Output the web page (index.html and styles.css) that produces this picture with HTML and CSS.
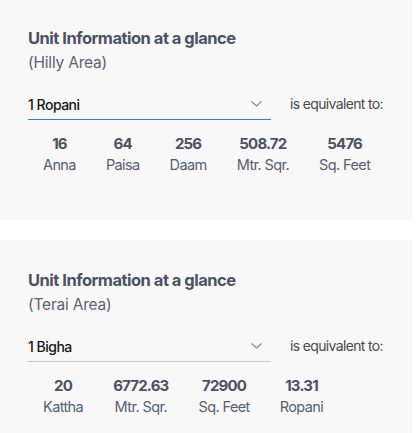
FILE: index.html
```html
<!DOCTYPE html>
<html>
<head>
<meta charset="utf-8">
<link rel="stylesheet" href="styles.css">
</head>
<body>
<section class="card">
  <h2 class="title">Unit Information at a glance</h2>
  <p class="subtitle">(Hilly Area)</p>
  <div class="row">
    <div class="select focus">
      <span class="select-value">1 Ropani</span>
      <svg class="chev" width="11" height="6" viewBox="0 0 11 6"><path d="M0.5 0.5 L5.5 5 L10.5 0.5" fill="none" stroke="#8a8a8a" stroke-width="1.2"/></svg>
    </div>
    <span class="equiv">is equivalent to:</span>
  </div>
  <div class="values">
    <div class="item"><div class="num">16</div><div class="label">Anna</div></div>
    <div class="item"><div class="num">64</div><div class="label">Paisa</div></div>
    <div class="item"><div class="num">256</div><div class="label">Daam</div></div>
    <div class="item"><div class="num">508.72</div><div class="label">Mtr. Sqr.</div></div>
    <div class="item"><div class="num">5476</div><div class="label">Sq. Feet</div></div>
  </div>
</section>
<section class="card">
  <h2 class="title">Unit Information at a glance</h2>
  <p class="subtitle">(Terai Area)</p>
  <div class="row">
    <div class="select">
      <span class="select-value">1 Bigha</span>
      <svg class="chev" width="11" height="6" viewBox="0 0 11 6"><path d="M0.5 0.5 L5.5 5 L10.5 0.5" fill="none" stroke="#8a8a8a" stroke-width="1.2"/></svg>
    </div>
    <span class="equiv">is equivalent to:</span>
  </div>
  <div class="values">
    <div class="item"><div class="num">20</div><div class="label">Kattha</div></div>
    <div class="item"><div class="num">6772.63</div><div class="label">Mtr. Sqr.</div></div>
    <div class="item"><div class="num">72900</div><div class="label">Sq. Feet</div></div>
    <div class="item"><div class="num">13.31</div><div class="label">Ropani</div></div>
  </div>
</section>
</body>
</html>
```
FILE: styles.css
```css
* { box-sizing: border-box; }
body {
  margin: 0;
  background: #ffffff;
  font-family: Inter, "Open Sans", sans-serif;
}
.card {
  width: 413px;
  height: 220px;
  background: #f8f8f8;
  padding: 26px 0 0 28px;
  white-space: nowrap;
}
.card + .card {
  margin-top: 20px;
  padding-top: 28px;
}
.title {
  margin: 0;
  font-size: 16.5px;
  line-height: 24px;
  font-weight: 700;
  color: #4b5262;
  letter-spacing: -0.5px;
}
.subtitle {
  margin: 2px 0 0 0;
  font-size: 15.5px;
  line-height: 22px;
  color: #5b6274;
  letter-spacing: -0.2px;
}
.row {
  display: flex;
  align-items: flex-end;
  margin-top: 20px;
}
.select {
  width: 243px;
  flex-shrink: 0;
  display: flex;
  align-items: center;
  justify-content: space-between;
  padding: 0 9px 4px 0;
  border-bottom: 1px solid #c6c6c6;
}
.select.focus { border-bottom-color: #3a7fcf; }
.select-value {
  font-size: 14px;
  line-height: 20px;
  font-weight: 500;
  color: #151515;
  letter-spacing: -0.5px;
}
.chev { margin-top: -2px; }
.equiv {
  margin-left: 19px;
  padding-bottom: 6px;
  font-size: 14px;
  line-height: 20px;
  color: #4a4a4a;
  letter-spacing: -0.65px;
}
.values {
  display: flex;
  margin-top: 14px;
}
.item {
  padding: 0 15px;
  text-align: center;
  flex-shrink: 0;
}
.num {
  font-size: 15px;
  line-height: 20px;
  font-weight: 700;
  color: #4b5262;
  letter-spacing: -0.8px;
}
.label {
  font-size: 14.5px;
  line-height: 21px;
  color: #566074;
  letter-spacing: -0.6px;
}
```
